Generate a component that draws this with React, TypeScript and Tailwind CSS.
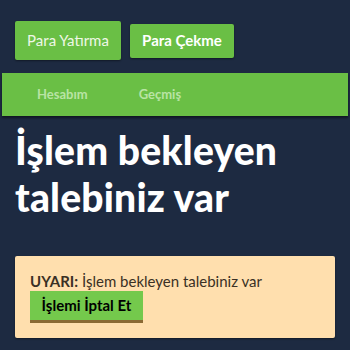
import React from "react";

export default function App() {
  return (
    <div className="w-[350px] h-[350px] overflow-hidden bg-[#1d2a41] font-['Lato',sans-serif]">
      <div className="flex items-center pt-[21px] px-[15px] gap-[9px]">
        <button className="w-[106px] h-[39px] bg-[#6abf45] rounded-[2px] text-[#eef7e6] text-[15px] shadow-[0_1px_2px_rgba(0,0,0,0.4)]">
          Para Yatırma
        </button>
        <button className="w-[104px] h-[34px] bg-[#6abf45] rounded-[2px] text-white text-[15px] font-bold shadow-[0_1px_2px_rgba(0,0,0,0.4)]">
          Para Çekme
        </button>
      </div>

      <nav className="mt-[13px] mx-[2px] h-[43px] bg-[#6abf45] flex items-center shadow-[0_2px_2px_rgba(0,0,0,0.45)]">
        <span className="ml-[35px] text-[13px] font-bold text-[#b9e4a4]">Hesabım</span>
        <span className="ml-[51px] text-[13px] font-bold text-[#b9e4a4]">Geçmiş</span>
      </nav>

      <h1 className="mt-[11px] px-[15px] text-white font-black text-[39px] leading-[47px] tracking-[0.2px]">
        İşlem bekleyen talebiniz var
      </h1>

      <div className="mt-[35px] mx-[15px] h-[82px] bg-[#ffdfae] rounded-[2px] px-[15px] pt-[15px] shadow-[0_1px_2px_rgba(0,0,0,0.4)]">
        <p className="text-[15px] leading-[20px] text-[#3a3024]">
          <span className="font-bold">UYARI:</span> İşlem bekleyen talebiniz var
        </p>
        <button className="w-[113px] h-[32px] bg-[#74c94c] border-b-[3px] border-[#8a6a34] text-black text-[15px] font-bold">
          İşlemi İptal Et
        </button>
      </div>
    </div>
  );
}
